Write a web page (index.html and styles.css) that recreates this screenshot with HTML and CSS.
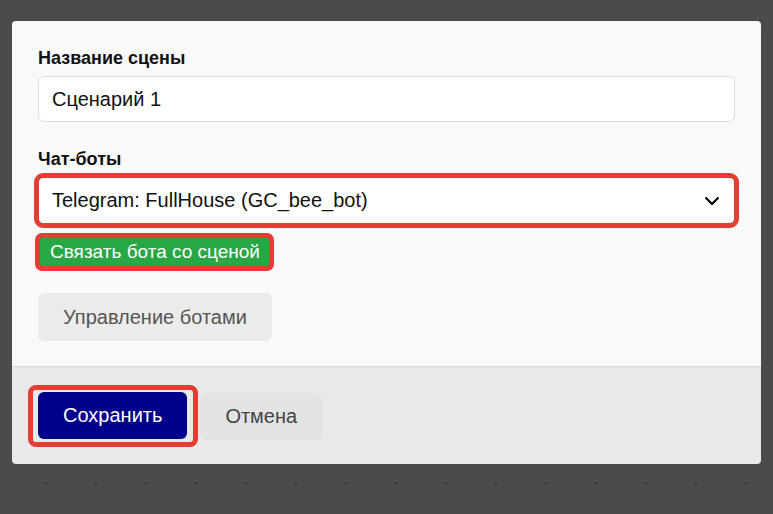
FILE: index.html
```html
<html lang="ru">
<head>
  <meta charset="UTF-8">
  <meta name="viewport" content="width=device-width, initial-scale=1.0">
  <title>Сцена</title>
  <link rel="stylesheet" href="styles.css">
</head>
<body>
  <div class="modal">
    <div class="modal-body">
      <label class="field-label">Название сцены</label>
      <div class="text-input">Сценарий 1</div>

      <label class="field-label">Чат-боты</label>
      <div class="select marked">
        <span>Telegram: FullHouse (GC_bee_bot)</span>
        <svg width="16" height="10" viewBox="0 0 16 10">
          <path d="M1.5 1.5 L8 8 L14.5 1.5" fill="none" stroke="#000" stroke-width="2.2"/>
        </svg>
      </div>

      <button class="btn-link marked">Связать бота со сценой</button>

      <button class="btn btn-light">Управление ботами</button>
    </div>

    <div class="modal-footer">
      <span class="ring">
        <button class="btn btn-primary">Сохранить</button>
      </span>
      <button class="btn btn-cancel">Отмена</button>
    </div>
  </div>
</body>
</html>
```

FILE: styles.css
```css
body {
  margin: 0;
  height: 514px;
  font-family: "Liberation Sans", Arial, sans-serif;
  background-color: #4b4b4b;
  background-image: radial-gradient(circle, #333 0.9px, transparent 1.1px);
  background-size: 50px 50px;
  background-position: 21px 8px;
  padding: 21px 0 0 12px;
  box-sizing: border-box;
}
.modal {
  width: 749px;
  border-radius: 4px;
  overflow: hidden;
}
.modal-body {
  background-color: #f9f9f9;
  padding: 27px 26px 25px;
  display: flex;
  flex-direction: column;
  align-items: flex-start;
  border-bottom: 1px solid #d6d6d6;
}
.field-label {
  display: block;
  font-size: 18px;
  font-weight: bold;
  color: #111;
  line-height: 21px;
  margin-bottom: 7px;
}
.text-input {
  width: 100%;
  box-sizing: border-box;
  height: 46px;
  padding: 0 13px;
  display: flex;
  align-items: center;
  font-size: 20px;
  color: #111;
  background: #fff;
  border: 1px solid #dcdcdc;
  border-radius: 6px;
  margin-bottom: 27px;
}
.select {
  width: 100%;
  box-sizing: border-box;
  height: 47px;
  padding: 0 14px 0 13px;
  display: flex;
  align-items: center;
  justify-content: space-between;
  font-size: 20px;
  color: #111;
  background: #fff;
  border: 1px solid #9aa2dc;
  border-radius: 4px;
}
.marked {
  outline: 5px solid #e53d33;
  outline-offset: -1px;
  border-radius: 5px;
}
.btn-link {
  margin-top: 13px;
  margin-left: 1px;
  font-family: inherit;
  font-size: 19px;
  line-height: 22px;
  padding: 4px 10px 4px 11px;
  color: #fff;
  background-color: #28a745;
  border: none;
  border-radius: 3px;
}
.btn {
  font-family: inherit;
  font-size: 20px;
  height: 47px;
  padding: 0 25px;
  border: none;
  border-radius: 6px;
}
.btn-light {
  margin-top: 26px;
  height: 48px;
  background-color: #ebebeb;
  color: #555;
}
.modal-footer {
  background-color: #e9e9e9;
  padding: 18px 26px 17px 16px;
  display: flex;
  align-items: center;
  gap: 2px;
}
.ring {
  display: inline-flex;
  padding: 2px 6px 3px 5px;
  border: 5px solid #e53d33;
  border-radius: 8px;
}
.btn-primary {
  background-color: #00008b;
  color: #fff;
}
.btn-cancel {
  background-color: #e3e3e3;
  color: #444;
}
```
